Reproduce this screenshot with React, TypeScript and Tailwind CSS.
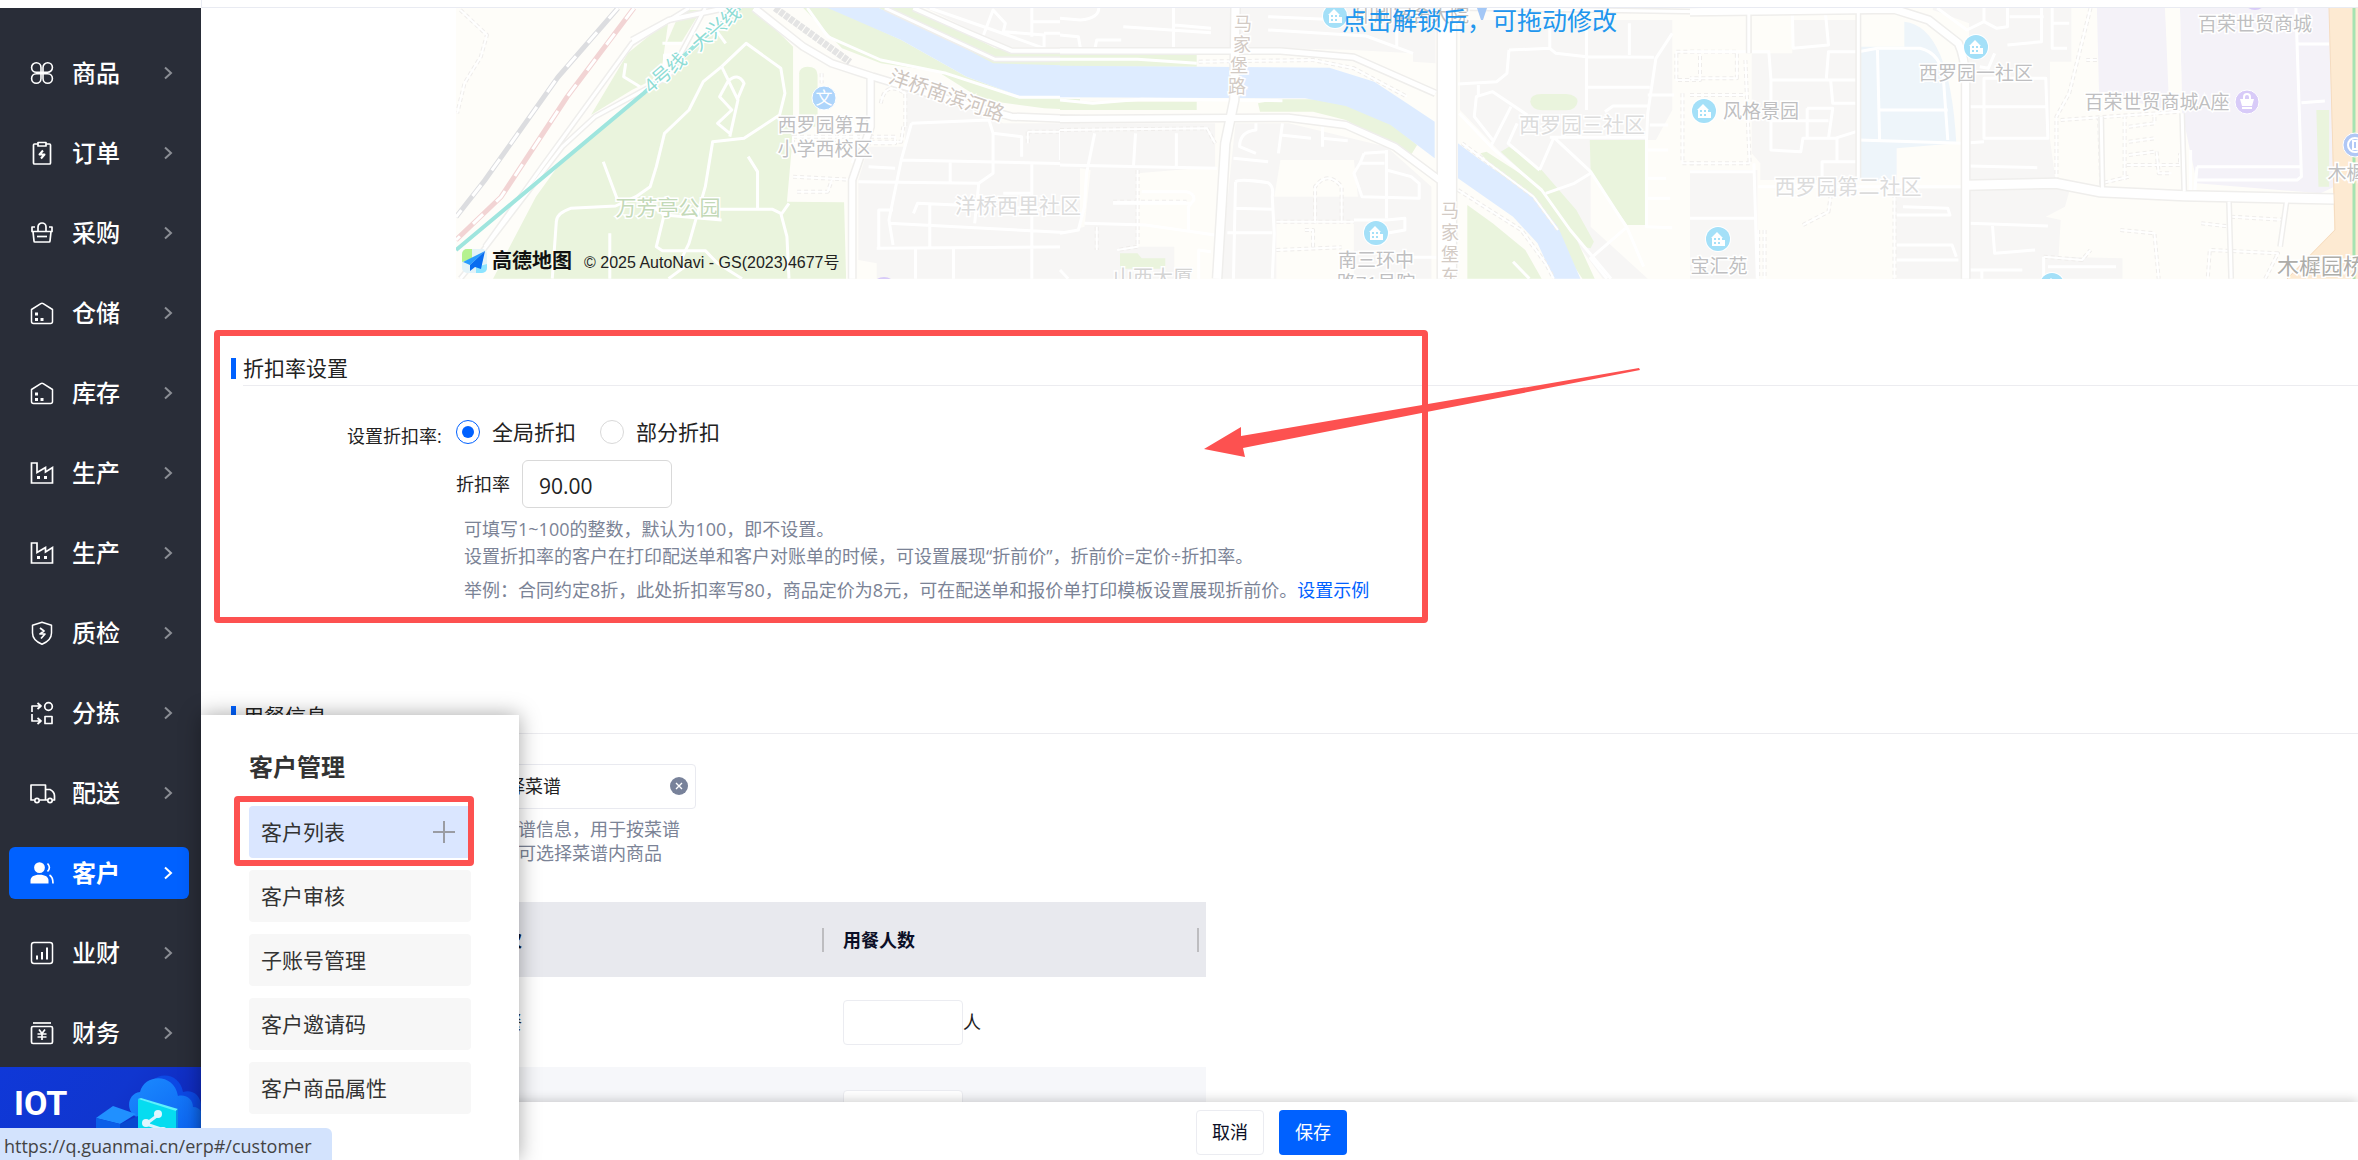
import React, { useState } from 'react';

type IconName =
  | 'goods' | 'order' | 'purchase' | 'store' | 'factory' | 'quality'
  | 'sorting' | 'delivery' | 'customer' | 'chart' | 'finance';

interface NavItem {
  key: string;
  label: string;
  icon: IconName;
}

const NAV_ITEMS: NavItem[] = [
  { key: 'goods', label: '商品', icon: 'goods' },
  { key: 'order', label: '订单', icon: 'order' },
  { key: 'purchase', label: '采购', icon: 'purchase' },
  { key: 'warehouse', label: '仓储', icon: 'store' },
  { key: 'stock', label: '库存', icon: 'store' },
  { key: 'produce', label: '生产', icon: 'factory' },
  { key: 'produce2', label: '生产', icon: 'factory' },
  { key: 'quality', label: '质检', icon: 'quality' },
  { key: 'sorting', label: '分拣', icon: 'sorting' },
  { key: 'delivery', label: '配送', icon: 'delivery' },
  { key: 'customer', label: '客户', icon: 'customer' },
  { key: 'business', label: '业财', icon: 'chart' },
  { key: 'finance', label: '财务', icon: 'finance' },
];

const SUB_ITEMS = ['客户列表', '客户审核', '子账号管理', '客户邀请码', '客户商品属性'];

const NavIcon: React.FC<{ name: IconName }> = ({ name }) => {
  const shapes: Record<IconName, React.ReactNode> = {
    goods: (
      <path
        d="M11 10.500V6.500A4.700 4.700 0 1 0 6.300 11.200H17.700A4.700 4.700 0 1 0 13 6.500V17.500A4.700 4.700 0 1 0 17.700 12.800H6.300A4.700 4.700 0 1 0 11 17.500V10.500"
        strokeWidth="1.6"
      />
    ),
    order: (
      <>
        <path d="M8 3H4.500a1 1 0 0 0-1 1v18a1 1 0 0 0 1 1h15a1 1 0 0 0 1-1V4a1 1 0 0 0-1-1H16" />
        <path d="M8 1.500h8v3.500H8z" />
        <path d="M13 9.500l-3.500 4h5l-3.500 4" strokeWidth="2" />
      </>
    ),
    purchase: (
      <>
        <path d="M5 6H2v4.500h20V6h-3" />
        <path d="M3 10.500L4 20a1 1 0 0 0 1 1h14a1 1 0 0 0 1-1l1-9.500" />
        <path d="M8 10.500V6a4 4 0 0 1 8 0v4.500" />
        <path d="M7 15.500h10" />
      </>
    ),
    store: (
      <>
        <path d="M1.500 8.500L10.800 2.600a2.400 2.400 0 0 1 2.400 0L22.500 8.500V20.500a2 2 0 0 1-2 2h-17a2 2 0 0 1-2-2z" strokeWidth="1.500" />
        <path d="M5 11.500h3v3H5zM5 17h3v3H5zM10.500 17h3v3h-3z" fill="#fff" stroke="none" />
      </>
    ),
    factory: (
      <>
        <path d="M1.500 2v20h21V6.500L15.500 11V6.500L7 11.500V2z" strokeLinejoin="miter" />
        <path d="M7 15h3v3H7zM14 15h3v3h-3z" fill="#fff" stroke="none" />
      </>
    ),
    quality: (
      <>
        <path d="M12 1.300l9.500 3V12c0 6-4 9-9.500 11.200C6.500 21 2.500 18 2.500 12V4.300z" strokeWidth="1.500" />
        <path d="M10 7l4 3-4 3h5l-4 4.500" />
      </>
    ),
    sorting: (
      <>
        <path d="M10 5H2v6M7.500 2L11 5 7.500 8M2 13v7h8M7.500 17l3.500 3-3.500 3" />
        <circle cx="18.500" cy="5.500" r="3.800" />
        <path d="M15 15.500h7V22.500h-7z" />
      </>
    ),
    delivery: (
      <>
        <path d="M4 19H1V4h14.500v15H10M18 19h-2.500M15.500 8.500h4.500c3 1.500 4.500 4 4.500 6.500v4h-1.500" />
        <circle cx="7" cy="19.500" r="2.200" />
        <circle cx="20" cy="19.500" r="2.200" />
      </>
    ),
    customer: (
      <>
        <path d="M9.500 12a5.400 5.400 0 1 0 0-10.800 5.400 5.400 0 0 0 0 10.800zM.500 22.500v-3c0-3.500 3-5.800 9-5.800s9 2.300 9 5.800v3z" fill="#fff" stroke="none" />
        <path d="M17.500 2.500c2.500 2.500 2.500 5.500 0 8M19.500 14c2.500 1.500 3.500 4 3.500 8.500" />
      </>
    ),
    chart: (
      <>
        <rect x="1.500" y="1.500" width="21" height="21" rx="2.500" strokeWidth="1.500" />
        <path d="M7 14.500v4M12 11v7.500M17 6.500v12" strokeWidth="2" />
      </>
    ),
    finance: (
      <>
        <path d="M3 2h18" />
        <rect x="1.500" y="5.500" width="21" height="17" rx="1.500" />
        <path d="M9 8.500l3 4 3-4M12 12.500V19M7.500 13h9M7.500 16h9" />
      </>
    ),
  };
  return (
    <svg
      className="h-6 w-6 shrink-0 overflow-visible"
      viewBox="0 0 24 24"
      fill="none"
      stroke="#fff"
      strokeWidth="1.7"
      strokeLinejoin="round"
      aria-hidden="true"
    >
      {shapes[name]}
    </svg>
  );
};

const Chevron: React.FC<{ active: boolean }> = ({ active }) => (
  <svg
    className={`h-4 w-3 ${active ? 'text-white' : 'text-[#8b8e95]'}`}
    viewBox="0 0 12 16"
    fill="none"
    stroke="currentColor"
    strokeWidth="2"
    aria-hidden="true"
  >
    <path d="M3 2.500L9 8l-6 5.500" />
  </svg>
);

const IotBanner: React.FC = () => (
  <a href="#/iot" className="relative mt-2 block h-24 shrink-0 overflow-hidden bg-[#1034d0]">
    <svg className="absolute inset-0 h-full w-full" viewBox="0 0 201 96" preserveAspectRatio="xMaxYMin slice" aria-hidden="true">
      <defs>
        <linearGradient id="iotBg" x1="0" y1="0" x2="1" y2="0.4">
          <stop offset="0" stopColor="#0f38d8" />
          <stop offset="0.6" stopColor="#1036cf" />
          <stop offset="1" stopColor="#1029bc" />
        </linearGradient>
        <linearGradient id="iotCloud" x1="0" y1="0" x2="0.6" y2="1">
          <stop offset="0" stopColor="#1b8bff" />
          <stop offset="1" stopColor="#0a5ef0" />
        </linearGradient>
      </defs>
      <rect width="201" height="96" fill="url(#iotBg)" />
      <path d="M152 14c10-10 28-6 31 11 9-3 17 3 18 12v59h-40z" fill="#0c48e4" />
      <path d="M137 50c-11-4-11-23 3-25 4-18 34-20 38 4 9-2 15 4 15 11 4 0 6 2 8 4v52h-62z" fill="url(#iotCloud)" />
      <path d="M96 51l17-12 23 8-16 10z" fill="#2090ff" />
      <path d="M96 51l24 6v39H96z" fill="#0b5fe8" />
      <path d="M120 57l18-8v47h-18z" fill="#0848d0" />
      <path d="M138 32l38 11v53h-38z" fill="#05dcf0" />
      <path d="M138 32l3-1 37 11-2 2z" fill="#5df2fb" />
      <path d="M176 44l2-2v54h-2z" fill="#0a8fe8" />
      <path d="M158 48l-12 9 18 6" stroke="#d8f4ff" strokeWidth="3" fill="none" />
      <circle cx="158" cy="47" r="4" fill="#e2f7ff" />
      <circle cx="146" cy="56" r="4" fill="#e2f7ff" />
      <circle cx="163" cy="64" r="4" fill="#e2f7ff" />
    </svg>
    <span className="relative block px-3.5 pt-4 font-[Roboto,sans-serif] text-[34px] leading-10 font-bold text-white">IOT</span>
    <span className="relative block px-4 pt-1 text-base leading-5 text-white">万物互联</span>
  </a>
);

const Sidebar: React.FC = () => (
  <aside className="flex w-[201px] shrink-0 flex-col bg-[#292d38]">
    <nav className="flex flex-col gap-7 pt-[39px]">
      {NAV_ITEMS.map((item) => {
        const active = item.key === 'customer';
        return (
          <a
            key={item.key}
            href={`#/${item.key}`}
            className={`mr-3 ml-[9px] flex h-13 items-center rounded-md pr-[15px] pl-[21px] text-2xl text-white ${
              active ? 'bg-[#0061ff] font-bold' : 'font-medium'
            }`}
          >
            <NavIcon name={item.icon} />
            <span className="ml-[18px] flex-1">{item.label}</span>
            <Chevron active={active} />
          </a>
        );
      })}
    </nav>
    <IotBanner />
  </aside>
);

/* 地图瓦片：每块使用自己的坐标网格 */
interface MapTileData {
  transform: string;
  areas: { fill: string; d: string }[];
  paths: string[];
  streets: string[];
  roads: { d: string; w: number }[];
}

const CREAM = '#fefdf9';
const BLOCK = '#f7f6f5';
const GREEN = '#eaf4dd';
const WATER = '#deecff';
const MALL = '#f4f2f8';
const CAMPUS = '#eef5fa';

const MAP_TILES: MapTileData[] = [
  {
    transform: 'translate(440 0) scale(.40816 .33333)',
    areas: [
      { fill: BLOCK, d: 'M1190 24H1568V145L1385 140z' },
      { fill: BLOCK, d: 'M1140 250V440H1050L1025 540V780L1070 790V836H1568V370L1380 370z' },
      { fill: GREEN, d: 'M770 24L865 140V400L850 605L990 607L995 836H130L235 590L300 480L500 285L740 24z' },
      { fill: GREEN, d: 'M370 345L460 160L560 60L545 190L520 240L470 270z' },
      { fill: GREEN, d: 'M590 30L555 130L590 130L640 30z' },
      { fill: GREEN, d: 'M880 220Q882 200 900 200Q925 200 925 225V380H880z' },
      { fill: GREEN, d: 'M890 24H960L1130 120L1290 230L1420 288L1568 297V330L1480 325L1330 300L1220 215L1080 190L985 145z' },
      { fill: GREEN, d: 'M1075 24H1170L1360 145L1568 160V197L1355 195z' },
      { fill: WATER, d: 'M950 24H1075L1225 105L1355 190L1568 197V292L1420 288L1290 230L1130 120z' },
    ],
    paths: [
      'M50 30L115 105L100 170L60 250L42 340', 'M865 410H1115V430H865zM865 530L1020 540M875 575H950L960 540',
      'M935 220V250M1080 310Q1090 240 1140 280V380M1055 425H1130L1135 380', 'M1440 395H1568M1440 395V430',
    ],
    streets: [
      'M690 200L750 130L835 205L845 280L832 345L745 415L668 425L650 560L610 730L590 780',
      'M690 200L645 245L610 330L550 400L530 500L515 560L480 590L430 618L320 625Q285 640 285 665L275 836',
      'M690 200L730 300L710 410M728 300L745 250Q730 215 705 245L685 290L715 330L680 370L710 400',
      'M400 485L435 600M755 470L778 515V625M685 628H815L835 640L850 710L855 836M855 610L835 645M416 700V836M550 640L530 740L545 752L650 752L680 790L740 836M600 800L560 836',
      'M670 80L700 130M490 595L550 645L690 660M455 190L450 230L490 260M545 130H600V165H550V200',
      'M1155 370L1345 360L1355 400L1425 410V470M1355 400V520L1320 550M1155 370L1130 480L1100 660L1110 735M1130 480L1568 492M1025 545L1320 550L1310 670M1100 670L1568 700M1160 640L1170 610L1450 625M1070 745L1568 740M1450 490V836M1520 390V480M1250 485V545M1200 610V740M1165 745V836M1258 745V836M1050 500L1115 505M1075 745V630H1110M1380 580H1450',
      'M900 24L950 110L1080 180L1240 220L1420 292H1568M1200 24L1355 90L1480 145M1330 110L1355 30L1385 70L1380 95L1480 105V145M1450 24V110M1450 65H1568M1480 100H1568M1010 370L1025 440L1010 490',
    ],
    roads: [
      { d: 'M770 24L890 140L960 190L1060 230L1250 300L1400 350L1568 358', w: 6 },
      { d: 'M1055 230V380L1010 540V836', w: 6 },
      { d: 'M1090 24L1240 110L1360 178H1568', w: 3 },
      { d: 'M1160 24L1300 100L1400 152H1568', w: 4 },
      { d: 'M650 24L560 230L380 350L300 440L225 560L100 760L50 836M610 24L470 130L250 500L110 740', w: 3 },
      { d: 'M470 120L560 60L700 24', w: 4 },
    ],
  },
  {
    transform: 'translate(1060 0) scale(.40816 .33333)',
    areas: [
      { fill: BLOCK, d: 'M0 24H920V190L865 185V160L720 150L540 145L0 145z' },
      { fill: BLOCK, d: 'M0 370H380V500L190 520V740H280V836H0V700L60 680L75 510L0 495z' },
      { fill: BLOCK, d: 'M430 370H560L800 440L910 560V836H720V670H530V836H390z' },
      { fill: CREAM, d: 'M540 480H720L730 590H525z' },
      { fill: BLOCK, d: 'M980 60H1500V330L1460 420H1300V680L1440 836H1330L1190 600L980 330z' },
      { fill: GREEN, d: 'M0 160H335V200H0zM0 305H335V330H0z' },
      { fill: GREEN, d: 'M485 310L540 298H620L740 325L810 370L875 435L860 465L700 360L620 335H490z' },
      { fill: GREEN, d: 'M1030 460L1045 455L1190 570L1240 650L1310 836H1280L1200 690z' },
      { fill: GREEN, d: 'M1080 455L1100 440L1180 510L1265 630L1308 725L1300 745L1280 740L1190 580z' },
      { fill: GREEN, d: 'M998 615L1060 670L1140 750L1180 836H998z' },
      { fill: GREEN, d: 'M1298 420H1435V675H1390L1300 520z' },
      { fill: GREEN, d: 'M1152 305Q1152 282 1180 282H1240Q1268 285 1268 305Q1265 330 1240 331H1180Q1155 328 1152 305z' },
      { fill: GREEN, d: 'M147 760H190L200 775H258V806H147z' },
      { fill: WATER, d: 'M0 197L660 203L770 245L850 310L918 365V475L810 375L700 318L600 295L0 292z' },
      { fill: WATER, d: 'M975 430L1030 480L1160 590L1220 680L1275 836H1210L1170 730L1110 650L975 535z' },
    ],
    paths: [
      'M340 185L620 180L720 205L850 290', 'M0 390L360 385L380 430M190 510V740L140 750M625 670V560Q655 510 690 560V670M530 665H720M530 750L690 742M130 605H310M90 680V750M600 690H620V740',
      'M975 570L1130 690L1190 790L1210 836M985 430L1160 590L1220 690',
      'M1510 155H1568V240H1510zM1525 280V490H1568',
    ],
    streets: [
      'M95 24Q95 55 50 60L0 55M0 105L45 110L50 145M85 150L90 120H150M278 24V145M155 80L370 98M280 75L370 85M510 50L650 58M510 90L750 108L865 160M825 90V140',
      'M85 400L65 520L60 620L45 690L0 700M185 400L180 500M285 400V500M0 495L385 505M200 575H310Q330 580 328 600L315 620V690M130 610H320M60 670L210 675L380 705M0 810L20 836M340 836V750L370 755',
      'M480 370V390Q440 395 440 440L480 460M425 475L510 485M545 370L535 460M540 405L615 415M643 370V440M643 415L705 422M430 545Q440 535 510 548Q525 560 520 590L525 700L520 836M430 545L425 836M425 625L520 628M410 698H520',
      'M800 450V655M745 460L800 455M745 460L735 490L720 520L740 590L880 595V550L860 530L800 510M735 490H795M720 660L800 660L845 655V690L800 700M860 772H925',
      'M1100 150L1200 145L1215 160L1290 170L1455 172M1100 150L1095 220L1070 245L975 252M1025 255V290M1060 420L1015 350L1020 290L1060 275L1145 345M1105 320L1055 440M1120 370L1098 430L1175 510M1290 80V330M1395 70V165M1290 262H1445M1335 335L1355 318H1440M1500 100L1460 175L1440 340L1437 420V680L1500 683M1200 412H1437M1210 412L1175 510M1210 412L1300 515L1390 685L1430 800M1300 520L1260 550L1190 580M1385 685L1300 775L1340 836M1440 285H1505M1445 375H1490M1440 450H1490M1440 535H1485M1440 595H1495M1200 80V145',
      'M0 300L80 310L200 298L545 302M0 178L190 178L335 190M978 340L1060 445L1180 570L1250 690L1350 836M1110 785L1150 836',
    ],
    roads: [
      { d: 'M0 153H540L720 172L920 280', w: 5 },
      { d: 'M0 357L560 353L700 375L820 440L930 540', w: 6 },
      { d: 'M430 24L427 300L405 430L385 836', w: 8 },
      { d: 'M948 24V836', w: 18 },
      { d: 'M975 24L1568 35', w: 3 },
    ],
  },
  {
    transform: 'translate(1690 0) scale(.42608 .33333)',
    areas: [
      { fill: BLOCK, d: 'M240 60H395V540H165V490L145 460V160H240z' },
      { fill: BLOCK, d: 'M0 510H158V836H0zM480 565H640V836H485z' },
      { fill: BLOCK, d: 'M570 24H895V185H845V420L860 560L890 575L880 620L835 650L870 660L865 770L1015 775V836H655V70L570 30z' },
      { fill: CAMPUS, d: 'M503 65Q610 80 625 430L485 445V540H400V140H503z' },
      { fill: MALL, d: 'M955 24H1115L1125 340H1155L1150 24H1505L1512 560L1480 580L1190 550L1155 340L960 280z' },
      { fill: CREAM, d: 'M1115 24H1150L1158 560H1130L1130 340z' },
      { fill: GREEN, d: 'M1470 330H1500V560H1475z' },
      { fill: '#fdead2', d: 'M1500 24H1568V836H1400L1512 690z' },
    ],
    paths: [
      'M0 155H110V235H0M0 285H130M130 180L140 490M0 490H140M160 690V836M480 560V836M175 690V836M1020 345V540M1030 380L1090 370V340M1030 425L1090 415M1030 465L1090 455M1025 495H1150V460M1095 455L1100 520H1130M960 350L965 550L1030 530M870 360L1150 335M940 24L890 280L860 350V540M955 180H930M1010 690L1090 700L1100 836M1200 670L1270 680M1270 650L1400 660M1350 836L1380 760L1220 750L1215 836M830 770L920 780L940 750M265 675L325 635L330 590',
    ],
    streets: [
      'M240 24L242 145L325 135L318 40M0 155H185L190 240H390M320 235L325 155H395L440 145H540Q590 160 595 240L605 420M440 150L445 420M445 330H605M395 420L640 430L690 425M190 240V450L260 455L265 415H340L390 395M330 240L335 310H390M275 325L335 325L325 415M275 325V415M190 362H325M345 415V485M310 540V485H390M0 515H150M160 560H640M0 655H150M500 620L605 625L610 645H485M485 735H615L625 770M485 780H630M655 670L840 678M710 678L715 760L760 755L810 750M655 810H780M685 810V836',
      'M580 24L650 90L690 65V24M690 65L720 85L745 80V24M745 135L825 125V24M750 50H830M850 24V145H885M850 70H890M690 235H835L840 415H690zM655 320H835M655 498L815 503M680 200L700 205L715 160M150 490L158 836M840 800H1000M830 836V770',
      'M1422 24L1435 530L1425 540H1190M1425 132H1500M1435 308L1490 303M1190 500H1435M1185 570L1190 500M1175 570V450',
    ],
    roads: [
      { d: 'M0 35L480 28L560 60L630 130Q645 170 647 240V836', w: 7 },
      { d: 'M647 556L860 550L960 575L1160 587L1512 597', w: 9 },
      { d: 'M138 40V160M395 35V540', w: 3 },
      { d: 'M1155 340L1160 575M965 350L968 565M1265 605L1270 836M1400 605L1385 740', w: 3 },
    ],
  },
];

interface MapLabel {
  text: string;
  x: number;
  y: number;
  size?: number;
  fill?: string;
  rotate?: number;
}

const MAP_LABELS: MapLabel[] = [
  { text: '西罗园第五', x: 825, y: 125 },
  { text: '小学西校区', x: 825, y: 149 },
  { text: '万芳亭公园', x: 668, y: 207, size: 21, fill: '#c3d9b8' },
  { text: '洋桥西里社区', x: 1018, y: 205, size: 21, fill: '#dcdcdc' },
  { text: '洋桥南滨河路', x: 947, y: 95, size: 20, fill: '#cfc7c1', rotate: 19 },
  { text: '4号线 · 大兴线', x: 692, y: 49, size: 19, fill: '#8edcd4', rotate: -41 },
  { text: '马', x: 1243, y: 23, size: 18, fill: '#d3cbc5' },
  { text: '家', x: 1242, y: 44, size: 18, fill: '#d3cbc5' },
  { text: '堡', x: 1239, y: 65, size: 18, fill: '#d3cbc5' },
  { text: '路', x: 1237, y: 86, size: 18, fill: '#d3cbc5' },
  { text: '马', x: 1450, y: 210, size: 18, fill: '#d3cbc5' },
  { text: '家', x: 1450, y: 232, size: 18, fill: '#d3cbc5' },
  { text: '堡', x: 1450, y: 254, size: 18, fill: '#d3cbc5' },
  { text: '东', x: 1450, y: 276, size: 18, fill: '#d3cbc5' },
  { text: '印刷宿舍大院', x: 1412, y: 15 },
  { text: '西罗园三社区', x: 1582, y: 124, size: 21, fill: '#dcdcdc' },
  { text: '南三环中', x: 1376, y: 260 },
  { text: '路71号院', x: 1376, y: 283 },
  { text: '山西大厦', x: 1153, y: 277, size: 20, fill: '#d4d4d4' },
  { text: '风格景园', x: 1761, y: 111 },
  { text: '西罗园一社区', x: 1976, y: 73 },
  { text: '西罗园第二社区', x: 1848, y: 186, size: 21, fill: '#dcdcdc' },
  { text: '宝汇苑', x: 1719, y: 266 },
  { text: '百荣世贸商城', x: 2255, y: 24 },
  { text: '百荣世贸商城A座', x: 2157, y: 102 },
  { text: '木樨园', x: 2356, y: 173 },
  { text: '木樨园桥', x: 2321, y: 265, size: 22, fill: '#aeada9' },
];

const ESTATES = [
  [1376, 233], [1704, 111], [1976, 47], [1718, 239], [1335, 16], [2052, 285],
];

const MapView: React.FC = () => (
  <div className="relative ml-[255px] h-[271px] overflow-hidden bg-[#fefdf9]">
    <svg className="block h-full w-full" role="img" aria-label="高德地图">
      <g transform="translate(-456 -8)">
        {MAP_TILES.map((tile) => (
          <g
            key={tile.transform}
            transform={tile.transform}
            fill="none"
            strokeLinejoin="round"
            className="[&_path]:[vector-effect:non-scaling-stroke]"
          >
            {tile.areas.map((a) => <path key={a.d} d={a.d} fill={a.fill} />)}
            {tile.paths.map((d) => (
              <path key={d} d={d} stroke="#efedeb" strokeWidth="4" strokeDasharray="4 3" />
            ))}
            {tile.paths.map((d) => <path key={`i${d}`} d={d} stroke="#fff" strokeWidth="2" />)}
            {tile.streets.map((d) => <path key={d} d={d} stroke="#fff" strokeWidth="3" />)}
            {tile.roads.map((r) => (
              <path key={r.d} d={r.d} stroke="#efeeec" strokeWidth={r.w + 3} />
            ))}
            {tile.roads.map((r) => <path key={`i${r.d}`} d={r.d} stroke="#fff" strokeWidth={r.w} />)}
          </g>
        ))}

        {/* 铁路与地铁 */}
        <g fill="none">
          <path d="M618 8L558 77L485 180L456 217" stroke="#dcdde0" strokeWidth="5" />
          <path d="M618 8L558 77L485 180L456 217" stroke="#fff" strokeWidth="3" strokeDasharray="14 18" />
          <path d="M634 8L567 97L501 197L456 240" stroke="#f2d4d4" strokeWidth="5" />
          <path d="M634 8L567 97L501 197L456 240" stroke="#fff" strokeWidth="3" strokeDasharray="14 18" />
          <path d="M740 8L701 40L644 93L456 250" stroke="#9fe5de" strokeWidth="4" />
          <path d="M775 8L850 62" stroke="#e4e4e4" strokeWidth="7" strokeDasharray="5 1" />
          <path d="M2354 8V279" stroke="#a6e3b2" strokeWidth="3" />
          <path d="M2329 8L2335 230L2287 279" stroke="#f5dcc0" strokeWidth="1" />
        </g>

        {ESTATES.map(([x, y]) => (
          <g key={`${x}-${y}`} transform={`translate(${x} ${y})`}>
            <circle r="13" fill="#fff" />
            <circle r="12" fill="#a4e0f8" />
            <path d="M-6 7V-1H-7L-1-7 5-1H4V1H7V7z" fill="#fff" />
            <path d="M-4-1h2v2h-2zM0-1h2v2H0zM-4 3h2v2h-2zM0 3h2v2H0z" fill="#a4e0f8" />
          </g>
        ))}
        <circle cx="824" cy="98" r="12" fill="#aed5fb" stroke="#fff" />
        <circle cx="884" cy="290" r="13" fill="#d8cbf8" />
        <circle cx="2255" cy="-2" r="12" fill="#d8cbf8" />
        <g transform="translate(2247 102)">
          <circle r="12" fill="#d8cbf8" stroke="#fff" />
          <path d="M-7-3H7L5 4H-5zM-5 5H5V7H-5z" fill="#fff" />
          <path d="M-3-2V-5a3 3 0 0 1 6 0v3" fill="none" stroke="#fff" strokeWidth="2" />
        </g>
        <g transform="translate(2355 145)">
          <circle r="12" fill="#b0c7f5" stroke="#fff" />
          <circle r="7" fill="none" stroke="#fff" strokeWidth="2" />
          <path d="M-2-4H2V4H-2z" fill="none" stroke="#fff" strokeWidth="2" />
        </g>
        <path d="M1477 8H1487L1483 20H1481z" fill="#a4c8f6" />

        <g textAnchor="middle" dominantBaseline="central" stroke="#fff" strokeWidth="3" paintOrder="stroke">
          <text x="824" y="97" fontSize="17" fill="#fff" stroke="none">文</text>
          {MAP_LABELS.map((l) => (
            <text
              key={`${l.text}${l.x}${l.y}`}
              x={l.x}
              y={l.y}
              fontSize={l.size ?? 19}
              fill={l.fill ?? '#bfbfc1'}
              transform={l.rotate ? `rotate(${l.rotate} ${l.x} ${l.y})` : undefined}
            >
              {l.text}
            </text>
          ))}
        </g>
      </g>
    </svg>

    <p className="absolute -top-1.5 left-[886px] text-[25px] leading-9 text-[#2196ee]">点击解锁后，可拖动修改</p>

    <div className="absolute bottom-1 left-1.5 flex items-center">
      <svg className="h-[26px] w-[26px]" viewBox="0 0 26 26" aria-hidden="true">
        <rect x="0" y="1" width="25" height="24" rx="5" fill="#e4f3f8" />
        <path d="M5 1h5v10L0 14V6a5 5 0 0 1 5-5z" fill="#b6f28f" />
        <path d="M14 25V19l11-3v4a5 5 0 0 1-5 5z" fill="#8de4ff" />
        <path d="M23 3L1 14l7 3z" fill="#2a9dff" />
        <path d="M23 3L8 17v6l5-4 6 2z" fill="#0a6df0" />
      </svg>
      <span className="ml-1 text-[20px] leading-6 font-bold text-[#111]">高德地图</span>
      <span className="ml-3 pt-1 font-['Liberation_Sans','Noto_Sans_CJK_SC',sans-serif] text-base leading-6 text-[#222]">
        © 2025 AutoNavi - GS(2023)4677号
      </span>
    </div>
  </div>
);

const SectionTitle: React.FC<{ title: string }> = ({ title }) => (
  <div className="flex h-7 items-start">
    <span className="h-[21px] w-[5px] bg-[#0061ff]" />
    <h2 className="ml-[7px] h-7 flex-1 border-b border-[#ececf0] text-[21px] leading-[21px] text-[#222]">{title}</h2>
  </div>
);

type DiscountMode = 'all' | 'part';

const RadioOption: React.FC<{ label: string; checked: boolean; onSelect: () => void }> = ({
  label,
  checked,
  onSelect,
}) => (
  <label className="flex items-center gap-3 text-[21px] leading-6">
    <input
      type="radio"
      name="discount-mode"
      checked={checked}
      onChange={onSelect}
      className="h-6 w-6 appearance-none rounded-full border border-[#d9d9d9] bg-white bg-clip-content p-[5px] checked:border-[#0061ff] checked:bg-[#0061ff]"
    />
    {label}
  </label>
);

const DiscountSection: React.FC = () => {
  const [mode, setMode] = useState<DiscountMode>('all');
  const [rate, setRate] = useState('90.00');

  return (
    <section className="mt-[79px] pl-[30px]">
      <SectionTitle title="折扣率设置" />
      <div className="mt-[34px] flex items-start pl-[116px]">
        <span className="w-[109px] pt-1 text-lg leading-6">设置折扣率:</span>
        <div>
          <div className="flex gap-6">
            <RadioOption label="全局折扣" checked={mode === 'all'} onSelect={() => setMode('all')} />
            <RadioOption label="部分折扣" checked={mode === 'part'} onSelect={() => setMode('part')} />
          </div>
          <div className="mt-4 flex items-center gap-3">
            <label htmlFor="rate" className="text-lg leading-6">折扣率</label>
            <input
              id="rate"
              value={rate}
              onChange={(e) => setRate(e.target.value)}
              className="h-12 w-[150px] rounded-md border border-[#d9d9d9] px-4 pt-1 text-[21px] text-[#222]"
            />
          </div>
          <div className="mt-2 pl-2 text-lg leading-[27px] text-[#7b8396]">
            <p>可填写1~100的整数，默认为100，即不设置。</p>
            <p>设置折扣率的客户在打印配送单和客户对账单的时候，可设置展现“折前价”，折前价=定价÷折扣率。</p>
            <p className="mt-[7px]">
              举例：合同约定8折，此处折扣率写80，商品定价为8元，可在配送单和报价单打印模板设置展现折前价。
              <a href="#/example" className="text-[#0061ff]">设置示例</a>
            </p>
          </div>
        </div>
      </div>
    </section>
  );
};

const MealSection: React.FC = () => (
  <section className="mt-[102px] pl-[30px]">
    <SectionTitle title="用餐信息" />
    <div className="mt-[30px] pl-[225px]">
      <div className="flex h-[45px] w-60 items-center justify-between rounded border border-[#e9eaf0] pr-[7px] pb-0.5 pl-3.5 text-lg">
        <button type="button" className="text-left">请选择菜谱</button>
        <button type="button" aria-label="清除" className="flex h-[18px] w-[18px] items-center justify-center rounded-full bg-[#78829a]">
          <svg className="h-2 w-2" viewBox="0 0 8 8" stroke="#fff" strokeWidth="1.4" aria-hidden="true">
            <path d="M1 1l6 6M7 1L1 7" />
          </svg>
        </button>
      </div>
      <p className="mt-2 w-60 pl-2 text-lg leading-6 text-[#7b8396]">
        选择菜谱信息，用于按菜谱
        <br />
        下单时可选择菜谱内商品
      </p>
      <table className="mt-[37px] w-[750px] table-fixed text-left text-lg">
        <thead>
          <tr className="h-[75px] bg-[#e8e9ee] text-[#0b0f26]">
            {['用餐次', '用餐人数'].map((title) => (
              <th key={title} className="p-0">
                <div className="mr-[7px] flex h-6 items-center border-r-2 border-[#bdbdc0] pl-3 font-bold">{title}</div>
              </th>
            ))}
          </tr>
        </thead>
        <tbody>
          {['第一餐', '第二餐'].map((meal) => (
            <tr key={meal} className="h-[90px] even:bg-[#f6f7fa]">
              <td className="px-3">{meal}</td>
              <td className="px-3">
                <label className="flex items-center">
                  <input aria-label={`${meal}人数`} className="h-[45px] w-30 rounded border border-[#ebecf1] bg-white px-3" />
                  人
                </label>
              </td>
            </tr>
          ))}
        </tbody>
      </table>
    </div>
  </section>
);

const SubMenu: React.FC = () => (
  <div className="absolute bottom-0 left-[201px] h-[445px] w-[318px] bg-white px-12 pt-[34px] shadow-[0_0_20px_rgba(0,0,0,0.35)]">
    <h3 className="text-2xl leading-9 font-bold text-[#333]">客户管理</h3>
    <ul className="mt-[21px] flex flex-col gap-3">
      {SUB_ITEMS.map((item, i) => (
        <li key={item} className={`flex h-13 items-center rounded ${i === 0 ? 'bg-[#dae6ff]' : 'bg-[#f7f7f7]'}`}>
          <a href="#/customer" className="flex-1 pl-3 text-[21px] leading-8 text-[#333]">{item}</a>
          {i === 0 && (
            <button type="button" aria-label="新建客户" className="mr-4">
              <svg className="h-[22px] w-[22px]" viewBox="0 0 22 22" stroke="#9a9ca3" strokeWidth="2" aria-hidden="true">
                <path d="M11 0v22M0 11h22" />
              </svg>
            </button>
          )}
        </li>
      ))}
    </ul>
  </div>
);

/* 标注：红框与箭头 */
const Annotations: React.FC = () => (
  <div className="pointer-events-none absolute inset-0">
    <div className="absolute top-[330px] left-[214px] h-[293px] w-[1214px] rounded-sm border-6 border-[#fd5150]" />
    <div className="absolute top-[796px] left-[234px] h-[70px] w-[240px] rounded-sm border-6 border-[#fd5150]" />
    <svg className="absolute top-[364px] left-[1204px] h-[98px] w-[440px]" viewBox="0 0 440 98" aria-hidden="true">
      <path d="M0 85L37 63V72L435 4L436 6L39 84L41 93z" fill="#fd5150" />
    </svg>
  </div>
);

const App: React.FC = () => {
  return (
    <div className="relative flex h-screen flex-col overflow-hidden bg-white font-['Open_Sans','Noto_Sans_CJK_SC',sans-serif] text-[#222]">
      <header className="ml-[201px] h-2 shrink-0 border-b border-l border-[#e9ebf2]" />
      <div className="flex min-h-0 flex-1">
        <Sidebar />
        <main className="flex min-w-0 flex-1 flex-col">
          <div className="min-h-0 flex-1 overflow-hidden">
            <MapView />
            <DiscountSection />
            <MealSection />
          </div>
          <footer className="relative flex h-[58px] shrink-0 items-start justify-center bg-white pt-2 text-lg shadow-[0_-2px_10px_rgba(0,0,0,0.18)]">
            <button type="button" className="mr-[15px] h-[45px] w-[68px] rounded border border-[#ebecf1] pb-0.5 text-[#0b0f26]">取消</button>
            <button type="button" className="mr-4 h-[45px] w-[68px] rounded bg-[#0061ff] pb-0.5 text-white">保存</button>
          </footer>
        </main>
      </div>
      <SubMenu />
      <div className="absolute bottom-0 left-0 h-8 w-[332px] rounded-tr-md bg-[#d3e3fd] px-1 text-lg leading-9 text-[#444]">
        https://q.guanmai.cn/erp#/customer
      </div>
      <Annotations />
    </div>
  );
};

export default App;
